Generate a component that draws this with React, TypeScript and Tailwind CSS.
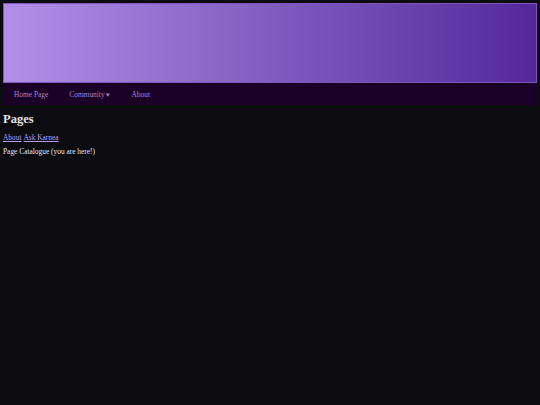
export default function App() {
  return (
    <div className="min-h-[405px] bg-[#0c0c10] px-[3px] pt-[3px] font-['Liberation_Serif',serif] text-[#e6e3ec]">
      <header className="h-[80px] border border-[#7a5ab8] bg-gradient-to-r from-[#b48ee8] to-[#55279a]" />
      <nav className="flex h-[22px] items-center bg-[#1a0026] px-[11px] pt-[1px] text-[7.4px] leading-[10px] text-[#a184dc]">
        <a className="pr-[21px]">Home Page</a>
        <a className="pr-[21px]">Community ▾</a>
        <a>About</a>
      </nav>
      <main>
        <h1 className="mt-[7px] text-[12.5px] font-bold leading-[14px]">Pages</h1>
        <div className="mt-[7px] flex gap-[2px] text-[7.4px] leading-[10px]">
          <a className="text-[#b49ef0] underline">About</a>
          <a className="text-[#b49ef0] underline">Ask Karnea</a>
        </div>
        <p className="mt-[4px] text-[7.4px] leading-[10px]">Page Catalogue (you are here!)</p>
      </main>
    </div>
  );
}
